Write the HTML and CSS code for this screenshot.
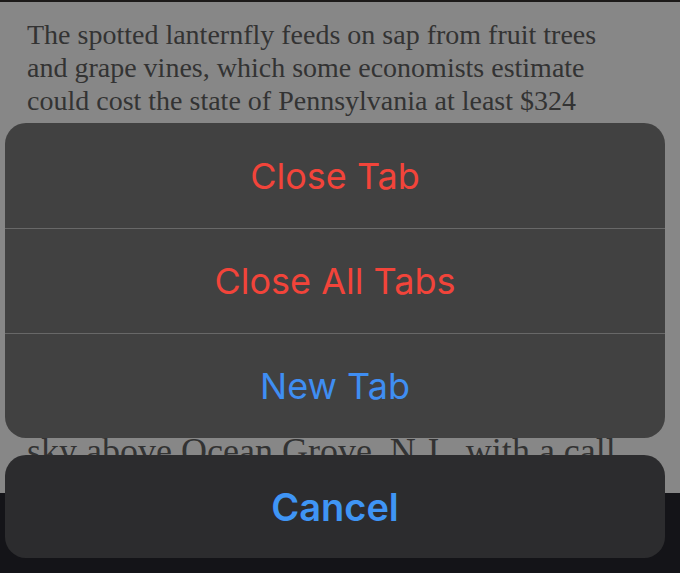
FILE: index.html
```html
<!DOCTYPE html>
<html lang="en">
  <head>
    <title>Article</title>
    <link rel="stylesheet" href="styles.css">
  </head>
  <body>
    <div class="page">
      <div class="photoEdge"></div>
      <div class="article">
        <p class="body">
          The spotted lanternfly feeds on sap from fruit trees and grape vines,
          which some economists estimate could cost the state of Pennsylvania at
          least $324 million a year.
        </p>
        <p class="lead">sky above Ocean Grove, N.J., with a call</p>
      </div>
      <div class="toolbar"></div>
    </div>

    <div class="sheet">
      <div class="group">
        <div class="action danger">Close Tab</div>
        <div class="action danger">Close All Tabs</div>
        <div class="action">New Tab</div>
      </div>
      <div class="cancel">Cancel</div>
    </div>
  </body>
</html>
```

FILE: styles.css
```css
* {
  margin: 0px;
  box-sizing: border-box;
}
body {
  background-color: #878787;
  width: 680px;
  height: 573px;
  overflow: hidden;
}
.page {
  height: 573px;
  display: flex;
  flex-direction: column;
}
.photoEdge {
  height: 2px;
  background-color: #1c1a19;
}
.article {
  flex: 1;
  display: flex;
  flex-direction: column;
  padding: 16px 62px 23px 27px;
  font-family: "Liberation Serif", serif;
  color: #333333;
}
.body {
  font-size: 28px;
  line-height: 33px;
}
.lead {
  margin-top: auto;
  font-size: 36px;
  line-height: 38px;
  white-space: nowrap;
}
.toolbar {
  height: 80px;
  background-color: #141418;
}
.sheet {
  position: absolute;
  left: 5px;
  right: 15px;
  top: 123px;
  display: flex;
  flex-direction: column;
  gap: 17px;
  font-family: Inter, "Noto Sans", sans-serif;
}
.group {
  background-color: #414141;
  border-radius: 21px;
  overflow: hidden;
}
.action {
  height: 105px;
  display: flex;
  align-items: center;
  justify-content: center;
  font-size: 36px;
  color: #3f8ef2;
  border-top: 1px solid #686868;
}
.action:first-child {
  border-top: none;
}
.danger {
  color: #f2443a;
}
.cancel {
  height: 103px;
  background-color: #2c2c2e;
  border-radius: 21px;
  display: flex;
  align-items: center;
  justify-content: center;
  font-size: 38px;
  font-weight: 600;
  color: #3f95f5;
}
```
